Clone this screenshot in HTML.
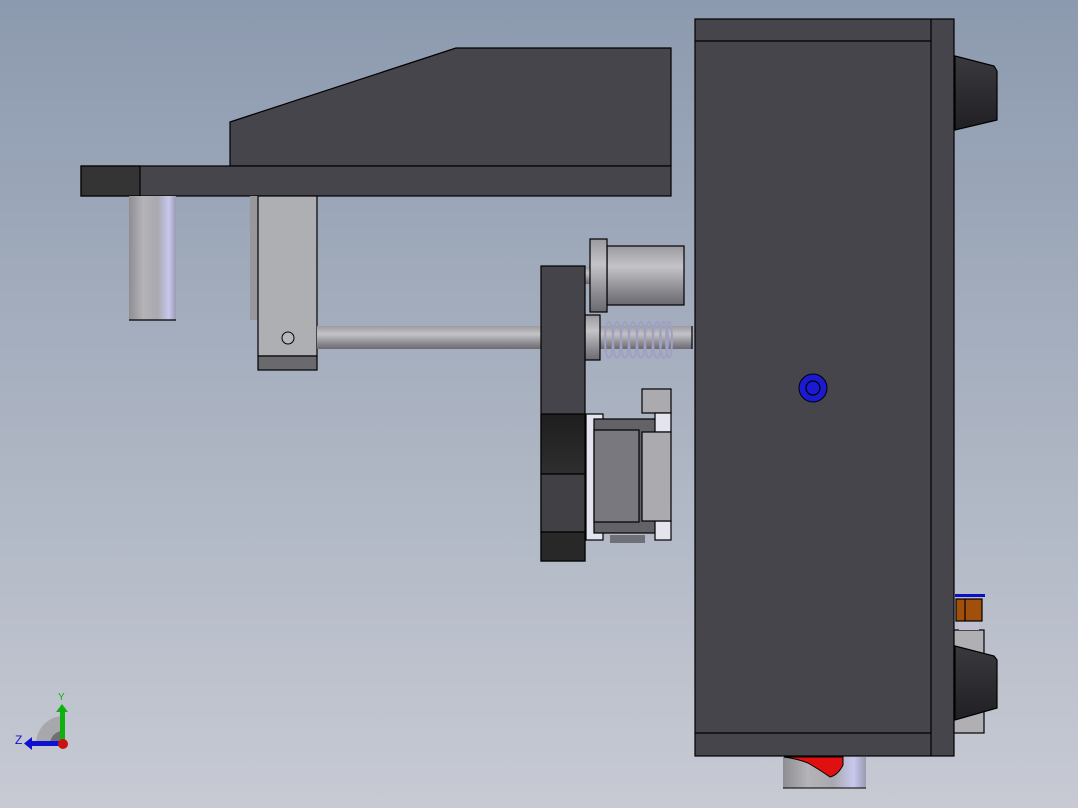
<!DOCTYPE html>
<html><head><meta charset="utf-8"><style>
html,body{margin:0;padding:0;width:1078px;height:808px;overflow:hidden}
</style></head><body>
<svg width="1078" height="808" viewBox="0 0 1078 808" xmlns="http://www.w3.org/2000/svg">
<defs>
<linearGradient id="bg" x1="0" y1="0" x2="0" y2="1"><stop offset="0" stop-color="#8c9aaf"/><stop offset="1" stop-color="#c7cad3"/></linearGradient>
<linearGradient id="cylV" x1="0" y1="0" x2="1" y2="0"><stop offset="0" stop-color="#8e8e92"/><stop offset="0.3" stop-color="#b4b4b8"/><stop offset="0.6" stop-color="#a8a8ae"/><stop offset="0.85" stop-color="#c8c8ee"/><stop offset="1" stop-color="#9a9ab0"/></linearGradient>
<linearGradient id="cylH" x1="0" y1="0" x2="0" y2="1"><stop offset="0" stop-color="#9a9aa0"/><stop offset="0.35" stop-color="#c4c4c8"/><stop offset="0.75" stop-color="#8a8a90"/><stop offset="1" stop-color="#6a6a70"/></linearGradient>
<linearGradient id="knob" x1="0" y1="0" x2="0" y2="1"><stop offset="0" stop-color="#3a3a3e"/><stop offset="1" stop-color="#202024"/></linearGradient>
<linearGradient id="dk" x1="0" y1="0" x2="0" y2="1"><stop offset="0" stop-color="#1e1e1e"/><stop offset="1" stop-color="#2e2e2e"/></linearGradient>
</defs>
<rect width="1078" height="808" fill="url(#bg)"/>
<g stroke="#000" stroke-width="1.2">
<polygon points="230,122 456,48 671,48 671,166 230,166" fill="#46454b"/>
<rect x="81" y="166" width="590" height="30" fill="#46454b"/>
<rect x="81" y="166" width="59" height="30" fill="#343434"/>
<rect x="129" y="196" width="47" height="124" fill="url(#cylV)" stroke="none"/>
<line x1="129" y1="320" x2="176" y2="320"/>
<rect x="250" y="196" width="9" height="124" fill="#98989c" stroke="none"/>
<rect x="258" y="196" width="59" height="160" fill="#aeafb3"/>
<rect x="258" y="356" width="59" height="14" fill="#6a6a6e"/>
<circle cx="288" cy="338" r="6" fill="#b8b8bc" stroke-width="1"/>
<rect x="317" y="326" width="224" height="23" fill="url(#cylH)" stroke="none"/>
<rect x="585" y="267" width="6" height="17" fill="url(#cylH)" stroke="none"/>
<rect x="607" y="246" width="77" height="59" fill="url(#cylH)"/>
<rect x="590" y="239" width="17" height="73" fill="url(#cylH)"/>
<rect x="585" y="326" width="107" height="23" fill="url(#cylH)" stroke="none"/>
<line x1="692" y1="326" x2="692" y2="349"/>
<rect x="585" y="315" width="15" height="45" fill="url(#cylH)"/>
<g fill="none" stroke="#a0a0c4" stroke-width="2">
<ellipse cx="609" cy="340" rx="4" ry="18"/><ellipse cx="617" cy="340" rx="4" ry="18"/><ellipse cx="625" cy="340" rx="4" ry="18"/><ellipse cx="633" cy="340" rx="4" ry="18"/><ellipse cx="641" cy="340" rx="4" ry="18"/><ellipse cx="649" cy="340" rx="4" ry="18"/><ellipse cx="657" cy="340" rx="4" ry="18"/><ellipse cx="664" cy="340" rx="4" ry="18"/><ellipse cx="669" cy="340" rx="3" ry="18"/>
</g>
<rect x="541" y="266" width="44" height="295" fill="#45444a"/>
<rect x="541" y="414" width="44" height="60" fill="url(#dk)"/>
<rect x="541" y="474" width="44" height="58" fill="#404045"/>
<rect x="541" y="532" width="44" height="29" fill="#282828"/>
<rect x="642" y="389" width="29" height="24" fill="#ababaf"/>
<rect x="586" y="414" width="17" height="126" fill="#e4e4ee"/>
<rect x="594" y="419" width="63" height="114" fill="#626268"/>
<rect x="594" y="430" width="45" height="92" fill="#78787e"/>
<rect x="655" y="413" width="16" height="19" fill="#e4e4ee"/>
<rect x="655" y="521" width="16" height="19" fill="#e4e4ee"/>
<rect x="642" y="432" width="29" height="89" fill="#ababaf"/>
<rect x="610" y="535" width="35" height="8" fill="#707078" stroke="none"/>
<rect x="695" y="19" width="259" height="737" fill="#46454b"/>
<line x1="695" y1="41" x2="931" y2="41"/>
<line x1="931" y1="19" x2="931" y2="756"/>
<line x1="695" y1="733" x2="931" y2="733"/>
<polygon points="955,56 994,66 997,71 997,120 955,130" fill="url(#knob)"/>
<rect x="954" y="630" width="30" height="103" fill="#b0b0b4"/>
<polygon points="955,646 994,656 997,660 997,708 955,720" fill="url(#knob)"/>
<rect x="959" y="621" width="20" height="9" fill="#c0c0d0" stroke="none"/>
<rect x="956" y="599" width="26" height="22" fill="#a0500a"/>
<line x1="965" y1="599" x2="965" y2="621"/>
</g>
<rect x="955" y="594" width="30" height="3" fill="#1010c0"/>
<rect x="783" y="757" width="83" height="31" fill="url(#cylV)"/>
<line x1="783" y1="788" x2="866" y2="788" stroke="#000"/>
<path d="M784,757 L843,757 L843,765 Q838,775 830,777 Q820,770 808,763 Q798,759 784,757 Z" fill="#e01010" stroke="#000" stroke-width="1"/>
<circle cx="813" cy="388" r="14" fill="#1a1ad0" stroke="#000" stroke-width="1"/>
<circle cx="813" cy="388" r="7" fill="none" stroke="#000" stroke-width="1.2"/>
<path d="M36,744 A28,28 0 0 1 62,716 L62,744 Z" fill="#a8a8ac"/>
<path d="M50,744 A13,13 0 0 1 62,731 L62,744 Z" fill="#707074"/>
<rect x="60" y="710" width="5" height="34" fill="#10b010"/>
<polygon points="56,712 62,704 68,712" fill="#10b010"/>
<rect x="30" y="741" width="32" height="5" fill="#1010d0"/>
<polygon points="32,737 24,743.5 32,750" fill="#1010d0"/>
<circle cx="63" cy="744" r="5" fill="#d01010"/>
<text x="58" y="700" font-family="Liberation Sans, sans-serif" font-size="10" fill="#10b010">Y</text>
<text x="15" y="744" font-family="Liberation Sans, sans-serif" font-size="12" fill="#1010d0">Z</text>
</svg>
</body></html>
